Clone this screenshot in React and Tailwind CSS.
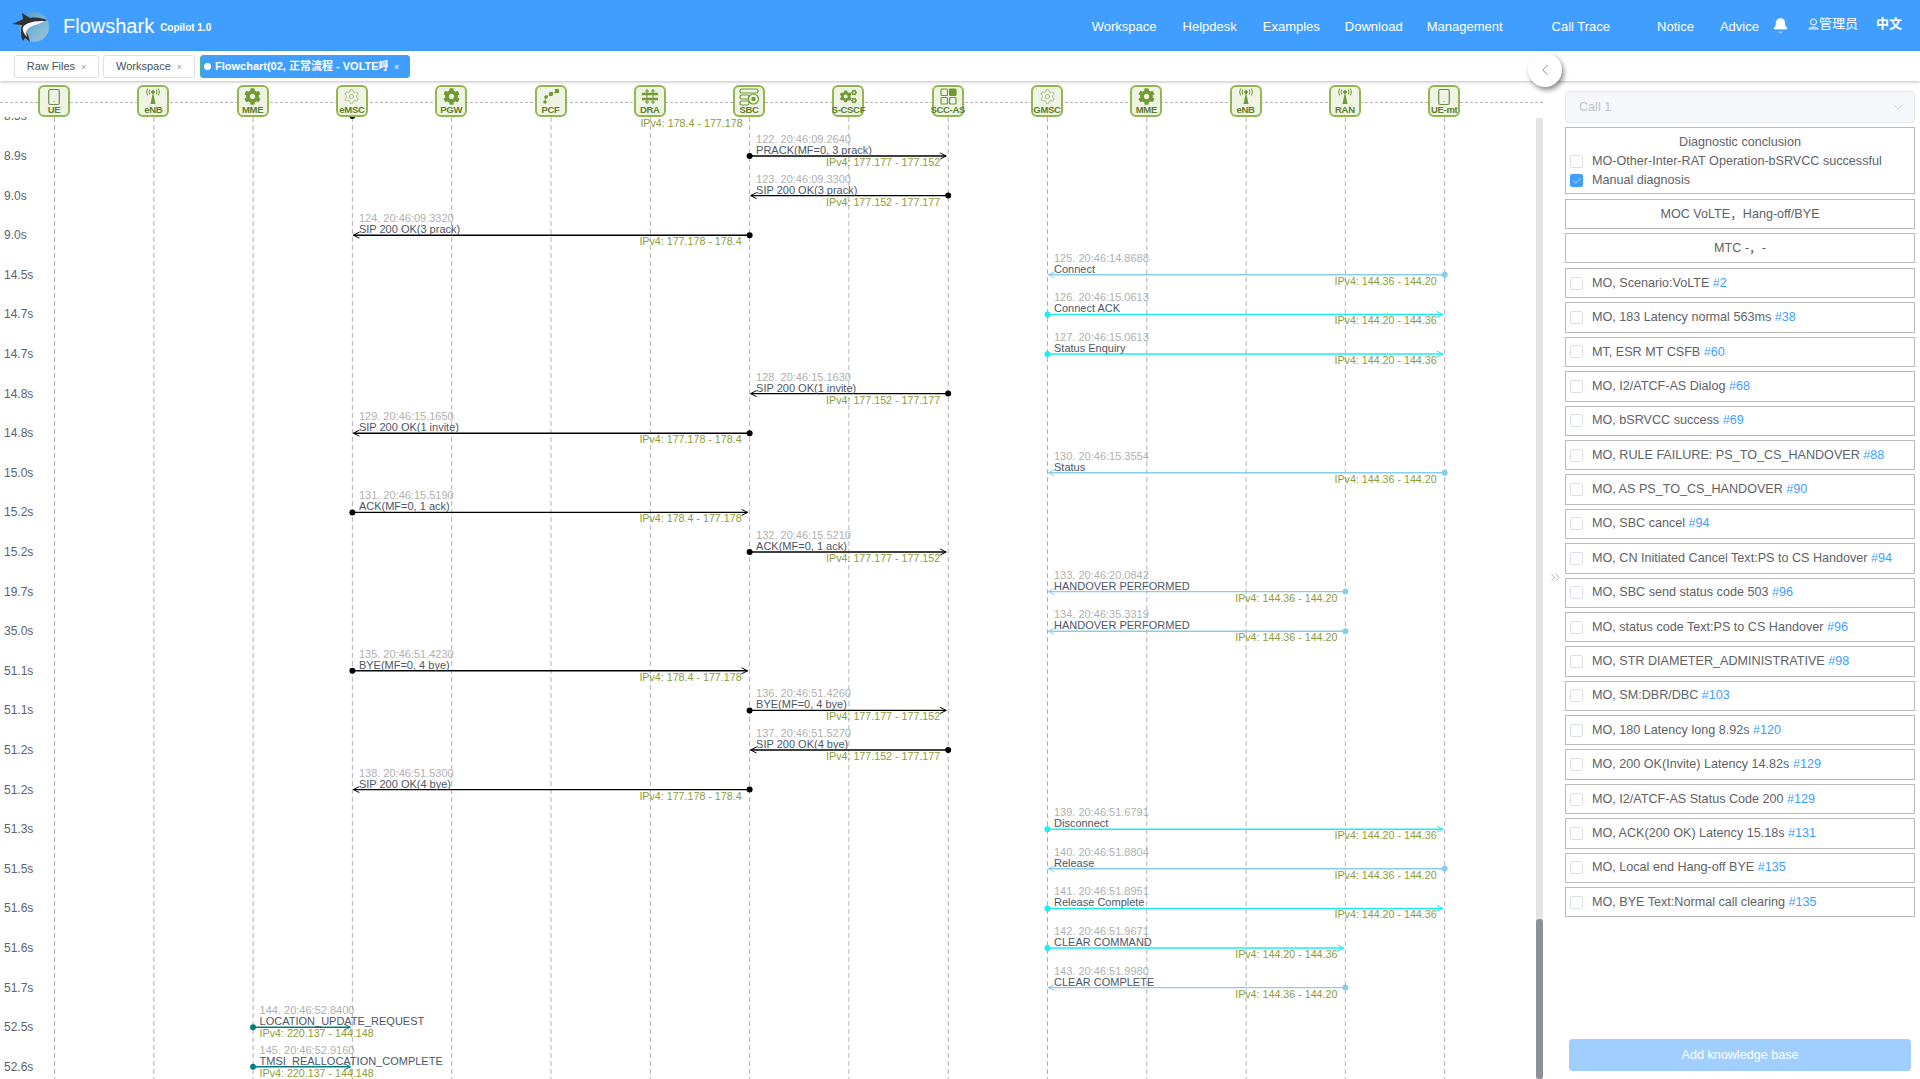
import { FaCog, FaCogs } from "react-icons/fa";
import { Settings, ChevronLeft, ChevronsRight, ChevronDown, Check, Bell, Smartphone } from "lucide-react";

const FONT = "[font-family:'Liberation_Sans','Noto_Sans_CJK_SC',sans-serif]";

const colX = Array.from({ length: 15 }, (_, i) => 54.5 + 99.3 * i);
const MME = 2, EMSC = 3, SBC = 7, SCC = 9, GMSC = 10, RAN = 13, UEMT = 14;

const BLACK = "#000000";
const SKY = "#87ceeb";
const CYAN = "#14f0f5";
const TEAL = "#007d7d";

const rowY = (i) => 156 + 39.6 * i - 117;

const times = ["8.9s", "9.0s", "9.0s", "14.5s", "14.7s", "14.7s", "14.8s", "14.8s", "15.0s", "15.2s", "15.2s", "19.7s", "35.0s", "51.1s", "51.1s", "51.2s", "51.2s", "51.3s", "51.5s", "51.6s", "51.6s", "51.7s", "52.5s", "52.6s"];

const messages = [
  { n: 122, t: "09.2640", name: "PRACK(MF=0, 3 prack)", from: SBC, to: SCC, c: BLACK, ip: "177.177 - 177.152" },
  { n: 123, t: "09.3300", name: "SIP 200 OK(3 prack)", from: SCC, to: SBC, c: BLACK, ip: "177.152 - 177.177" },
  { n: 124, t: "09.3320", name: "SIP 200 OK(3 prack)", from: SBC, to: EMSC, c: BLACK, ip: "177.178 - 178.4" },
  { n: 125, t: "14.8688", name: "Connect", from: UEMT, to: GMSC, c: SKY, ip: "144.36 - 144.20" },
  { n: 126, t: "15.0613", name: "Connect ACK", from: GMSC, to: UEMT, c: CYAN, ip: "144.20 - 144.36" },
  { n: 127, t: "15.0613", name: "Status Enquiry", from: GMSC, to: UEMT, c: CYAN, ip: "144.20 - 144.36" },
  { n: 128, t: "15.1630", name: "SIP 200 OK(1 invite)", from: SCC, to: SBC, c: BLACK, ip: "177.152 - 177.177" },
  { n: 129, t: "15.1650", name: "SIP 200 OK(1 invite)", from: SBC, to: EMSC, c: BLACK, ip: "177.178 - 178.4" },
  { n: 130, t: "15.3554", name: "Status", from: UEMT, to: GMSC, c: SKY, ip: "144.36 - 144.20" },
  { n: 131, t: "15.5190", name: "ACK(MF=0, 1 ack)", from: EMSC, to: SBC, c: BLACK, ip: "178.4 - 177.178" },
  { n: 132, t: "15.5210", name: "ACK(MF=0, 1 ack)", from: SBC, to: SCC, c: BLACK, ip: "177.177 - 177.152" },
  { n: 133, t: "20.0842", name: "HANDOVER PERFORMED", from: RAN, to: GMSC, c: SKY, ip: "144.36 - 144.20" },
  { n: 134, t: "35.3319", name: "HANDOVER PERFORMED", from: RAN, to: GMSC, c: SKY, ip: "144.36 - 144.20" },
  { n: 135, t: "51.4230", name: "BYE(MF=0, 4 bye)", from: EMSC, to: SBC, c: BLACK, ip: "178.4 - 177.178" },
  { n: 136, t: "51.4260", name: "BYE(MF=0, 4 bye)", from: SBC, to: SCC, c: BLACK, ip: "177.177 - 177.152" },
  { n: 137, t: "51.5270", name: "SIP 200 OK(4 bye)", from: SCC, to: SBC, c: BLACK, ip: "177.152 - 177.177" },
  { n: 138, t: "51.5300", name: "SIP 200 OK(4 bye)", from: SBC, to: EMSC, c: BLACK, ip: "177.178 - 178.4" },
  { n: 139, t: "51.6791", name: "Disconnect", from: GMSC, to: UEMT, c: CYAN, ip: "144.20 - 144.36" },
  { n: 140, t: "51.8804", name: "Release", from: UEMT, to: GMSC, c: SKY, ip: "144.36 - 144.20" },
  { n: 141, t: "51.8951", name: "Release Complete", from: GMSC, to: UEMT, c: CYAN, ip: "144.20 - 144.36" },
  { n: 142, t: "51.9671", name: "CLEAR COMMAND", from: GMSC, to: RAN, c: CYAN, ip: "144.20 - 144.36" },
  { n: 143, t: "51.9980", name: "CLEAR COMPLETE", from: RAN, to: GMSC, c: SKY, ip: "144.36 - 144.20" },
  { n: 144, t: "52.8400", name: "LOCATION_UPDATE_REQUEST", from: MME, to: EMSC, c: TEAL, ip: "220.137 - 144.148", ipLeft: true },
  { n: 145, t: "52.9160", name: "TMSI_REALLOCATION_COMPLETE", from: MME, to: EMSC, c: TEAL, ip: "220.137 - 144.148", ipLeft: true },
];

const findings = [
  ["MO, Scenario:VoLTE", "#2"],
  ["MO, 183 Latency normal 563ms", "#38"],
  ["MT, ESR MT CSFB", "#60"],
  ["MO, I2/ATCF-AS Dialog", "#68"],
  ["MO, bSRVCC success", "#69"],
  ["MO, RULE FAILURE: PS_TO_CS_HANDOVER", "#88"],
  ["MO, AS PS_TO_CS_HANDOVER", "#90"],
  ["MO, SBC cancel", "#94"],
  ["MO, CN Initiated Cancel Text:PS to CS Handover", "#94"],
  ["MO, SBC send status code 503", "#96"],
  ["MO, status code Text:PS to CS Handover", "#96"],
  ["MO, STR DIAMETER_ADMINISTRATIVE", "#98"],
  ["MO, SM:DBR/DBC", "#103"],
  ["MO, 180 Latency long 8.92s", "#120"],
  ["MO, 200 OK(Invite) Latency 14.82s", "#129"],
  ["MO, I2/ATCF-AS Status Code 200", "#129"],
  ["MO, ACK(200 OK) Latency 15.18s", "#131"],
  ["MO, Local end Hang-off BYE", "#135"],
  ["MO, BYE Text:Normal call clearing", "#135"],
];

const Tower = () => (
  <svg width="20" height="17" viewBox="0 0 20 17" fill="none" stroke="#6f9a34" strokeWidth="1">
    <circle cx="10" cy="4" r="1.4" fill="#6f9a34" />
    <path d="M10 4 L7.5 16 H12.5 Z" fill="#6f9a34" stroke="none" />
    <path d="M6.8 1.5 Q5.4 4 6.8 6.5 M13.2 1.5 Q14.6 4 13.2 6.5 M4.6 0.5 Q2.6 4 4.6 7.5 M15.4 0.5 Q17.4 4 15.4 7.5" />
  </svg>
);

const Pcf = () => (
  <svg width="20" height="17" viewBox="0 0 20 17" fill="#6f9a34" stroke="#6f9a34" strokeWidth="1">
    <rect x="14" y="1" width="4" height="4" stroke="none" />
    <circle cx="10" cy="6" r="2.2" stroke="none" />
    <circle cx="5" cy="9" r="1.8" stroke="none" />
    <circle cx="4" cy="14" r="1.8" stroke="none" />
    <path d="M15 4 L10 6 L5 9 L4 14" fill="none" strokeDasharray="2 1" />
  </svg>
);

const Dra = () => (
  <svg width="20" height="17" viewBox="0 0 20 17" fill="none" stroke="#6f9a34" strokeWidth="1.4">
    <path d="M2 6 H18 M2 11 H18" strokeWidth="2.4" />
    <path d="M7 1 V16 M13 1 V16 M5 3 H9 M11 3 H15 M5 14 H9 M11 14 H15" strokeWidth="1.1" />
  </svg>
);

const Sbc = () => (
  <svg width="22" height="18" viewBox="0 0 22 18" fill="none" stroke="#6f9a34" strokeWidth="1.2">
    <rect x="2" y="1" width="18" height="4" rx="1.5" />
    <rect x="2" y="7" width="9" height="4" rx="1.5" />
    <rect x="2" y="13" width="9" height="4" rx="1.5" />
    <circle cx="15.5" cy="11" r="5" fill="#eef3e3" />
    <circle cx="15.5" cy="11" r="2.2" fill="#6f9a34" stroke="none" />
  </svg>
);

const Scc = () => (
  <svg width="20" height="17" viewBox="0 0 20 17" fill="none" stroke="#6f9a34" strokeWidth="1.2">
    <rect x="3" y="1" width="6.5" height="6.5" rx="1" />
    <rect x="11.5" y="1" width="6.5" height="6.5" rx="1" fill="#6f9a34" />
    <rect x="3" y="9.5" width="6.5" height="6.5" rx="1" />
    <rect x="11.5" y="9.5" width="6.5" height="6.5" rx="1" />
  </svg>
);

const solidGear = <FaCog size={17} color="#6f9a34" />;
const lineGear = <Settings size={17} color="#87a860" strokeWidth={1} />;
const phone = <Smartphone size={18} color="#6f8a4a" strokeWidth={1.6} />;

const nodes = [
  ["UE", phone], ["eNB", <Tower />], ["MME", solidGear], ["eMSC", lineGear], ["PGW", solidGear],
  ["PCF", <Pcf />], ["DRA", <Dra />], ["SBC", <Sbc />], ["S-CSCF", <FaCogs size={17} color="#6f9a34" />], ["SCC-AS", <Scc />],
  ["GMSC", lineGear], ["MME", solidGear], ["eNB", <Tower />], ["RAN", <Tower />], ["UE-mt", phone],
];

const Logo = () => (
  <svg width="38" height="34" viewBox="0 0 38 34">
    <defs>
      <linearGradient id="ball" x1="0" y1="0" x2="1" y2="1">
        <stop offset="0" stopColor="#4f9ad0" />
        <stop offset="1" stopColor="#9cc8da" />
      </linearGradient>
    </defs>
    <circle cx="22" cy="19" r="15" fill="url(#ball)" />
    <path d="M0 16 C6 14 9 12 11 11 L10 5 L18 10 C24 9 30 10 35 12 C29 15 24 15 20 17 C15 19 13 22 16 27 L18 34 L13 30 L11 33 C8 27 9 20 10 17 Z" fill="#2d3336" />
    <path d="M11 19 C15 14 22 13 33 13 C26 17 20 17 17 20 C14 22 14 26 15 29 C12 26 10 22 11 19 Z" fill="#f4f6f7" />
  </svg>
);

const Tab = ({ label, width }) => (
  <div className={`flex items-center justify-center gap-[6px] h-[23px] ${width} border border-[#dcdfe6] rounded-[3px] bg-white text-[11px] text-[#495060]`}>
    <span>{label}</span>
    <span className="text-[9px] text-[#99a] mt-[2px]">×</span>
  </div>
);

const CheckBox = ({ checked }) =>
  checked ? (
    <span className="flex items-center justify-center w-[13px] h-[13px] rounded-[2px] bg-[#409eff] shrink-0">
      <Check size={10} color="#ffffff" strokeWidth={1.5} />
    </span>
  ) : (
    <span className="w-[13px] h-[13px] border border-[#dcdfe6] rounded-[2px] bg-white shrink-0" />
  );

const Chart = () => (
  <div className="relative flex-1 overflow-hidden">
    <svg className="absolute left-0 top-0" width="1536" height="962">
      {colX.map((x) => (
        <line key={x} x1={x} x2={x} y1="0" y2="962" stroke="#b4b4b4" strokeDasharray="5 3" />
      ))}
      <circle cx={colX[EMSC]} cy="-1" r="3" fill="#000000" />
      {messages.map((m, i) => {
        const y = rowY(i);
        const x1 = colX[m.from];
        const dir = m.to > m.from ? 1 : -1;
        const x2 = colX[m.to] - dir * (dir > 0 ? 2 : 1);
        return (
          <g key={m.n} stroke={m.c} fill="none">
            <line x1={x1} x2={x2} y1={y} y2={y} strokeWidth="1.4" />
            <polyline points={`${x2 - dir * 6},${y - 3} ${x2},${y} ${x2 - dir * 6},${y + 3}`} strokeWidth="1" />
            <circle cx={x1} cy={y} r="3" fill={m.c} stroke="none" />
          </g>
        );
      })}
    </svg>

    <div className="absolute text-right text-[10.7px] leading-[13px] text-[#8c9c3a] whitespace-nowrap" style={{ top: 0, left: colX[SBC] - 207, width: 200 }}>
      IPv4: 178.4 - 177.178
    </div>
    <div className="absolute left-[4px] text-[12px] leading-[14px] text-[#5a6270]" style={{ top: rowY(-1) - 7 }}>
      8.5s
    </div>
    {times.map((t, i) => (
      <div key={i} className="absolute left-[4px] text-[12px] leading-[14px] text-[#5a6270]" style={{ top: rowY(i) - 7 }}>
        {t}
      </div>
    ))}

    {messages.map((m, i) => {
      const y = rowY(i);
      const left = colX[Math.min(m.from, m.to)] + 6.5;
      const right = colX[Math.max(m.from, m.to)] - 8;
      return (
        <div key={m.n}>
          <div className="absolute text-[11px] leading-[13px] text-[#b0b0b0] whitespace-nowrap" style={{ left, top: y - 23 }}>
            {m.n}. 20:46:{m.t}
          </div>
          <div className="absolute text-[11px] leading-[13px] text-[#4d5666] whitespace-nowrap" style={{ left, top: y - 12 }}>
            {m.name}
          </div>
          <div
            className={`absolute text-[10.7px] leading-[13px] text-[#8c9c3a] whitespace-nowrap ${m.ipLeft ? "text-left" : "text-right"}`}
            style={m.ipLeft ? { left, top: y } : { left: right - 200, width: 200, top: y }}
          >
            IPv4: {m.ip}
          </div>
        </div>
      );
    })}

    <div className="absolute left-[1536px] top-[1px] bottom-0 w-[7px] bg-[#e4e4e4]">
      <div className="absolute left-0 right-0 top-[801px] bottom-0 rounded-[3px] bg-[#8c9299]" />
    </div>
  </div>
);

const App = () => {
  return (
    <div className={`relative flex flex-col w-full h-screen overflow-hidden bg-white ${FONT}`}>
      <header className="flex items-center h-[51px] bg-[#409eff] text-white shrink-0">
        <div className="ml-[12px] mt-[-1px]"><Logo /></div>
        <div className="ml-[13px] text-[20px] leading-none">Flowshark</div>
        <div className="ml-[6px] mt-[5px] text-[10px] font-bold leading-none">Copilot 1.0</div>
        <nav className="ml-auto mt-[2px] flex items-center text-[13px] pr-[18px]">
          <span>Workspace</span>
          <span className="ml-[26px]">Helpdesk</span>
          <span className="ml-[26px]">Examples</span>
          <span className="ml-[25px]">Download</span>
          <span className="ml-[24px]">Management</span>
          <span className="ml-[49px]">Call Trace</span>
          <span className="ml-[47px]">Notice</span>
          <span className="ml-[26px]">Advice</span>
          <Bell size={17} className="ml-[13px] mt-[-3px]" fill="#ffffff" strokeWidth={1} />
          <span className="ml-[19px] mt-[-6px] flex items-center text-[13px] font-normal">
            <svg width="11" height="12" viewBox="0 0 11 12" fill="none" stroke="#ffffff">
              <circle cx="5.5" cy="4" r="3" />
              <path d="M0.8 11 C1.5 8.5 9.5 8.5 10.2 11 Z" />
            </svg>
            管理员
          </span>
          <span className="ml-[18px] mt-[-6px] font-bold text-[13px]">中文</span>
        </nav>
      </header>

      <div className="flex items-center gap-[4px] pl-[14px] pt-[1px] h-[30px] shrink-0 shadow-[0_1px_3px_rgba(0,0,0,0.25)] z-10 bg-white">
        <Tab label="Raw Files" width="w-[85px]" />
        <Tab label="Workspace" width="w-[92px]" />
        <div className="flex items-center h-[23px] w-[210px] ml-[1px] bg-[#409eff] border border-[#42b983] rounded-[3px] text-white text-[11px] font-bold">
          <span className="ml-[3px] w-[7px] h-[7px] rounded-full bg-white shrink-0" />
          <span className="ml-[4px] w-[173px] overflow-hidden whitespace-nowrap">Flowchart(02, 正常流程 - VOLTE呼叫</span>
          <span className="ml-[6px] text-[9px] mt-[2px] font-normal">×</span>
        </div>
      </div>

      <main className="flex flex-1 min-h-0">
        <section className="flex flex-col w-[1546px] shrink-0">
          <div className="relative h-[36px] shrink-0">
            <div className="absolute left-0 w-[1543px] top-[21px] border-t border-dashed border-[#b4b4b4]" />
            {nodes.map(([label, icon], i) => (
              <div
                key={i}
                className="absolute top-[4px] flex flex-col items-center w-[32px] h-[32px] pt-[1px] rounded-[6px] border-2 border-[#93b552] bg-[#eef3e3]"
                style={{ left: colX[i] - 16.5 }}
              >
                <div className="flex items-center justify-center h-[17px]">{icon}</div>
                <div className="text-[9.5px] leading-[10px] font-bold text-[#5f7f2d] whitespace-nowrap tracking-[-0.3px]">{label}</div>
              </div>
            ))}
          </div>
          <Chart />
        </section>

        <div className="flex items-center justify-center w-[19px] pb-[6px] shrink-0">
          <ChevronsRight size={15} color="#7d828c" strokeWidth={1} />
        </div>

        <aside className="flex flex-col w-[350px] shrink-0 pt-[10px] pb-[8px] text-[12.6px] text-[#606266]">
          <div className="flex items-center justify-between h-[32px] px-[13px] bg-[#f5f7fa] border border-[#e4e7ed] rounded-[4px] text-[#c0c4cc]">
            <span>Call 1</span>
            <ChevronDown size={16} color="#c0c4cc" strokeWidth={1} className="mr-[-5px]" />
          </div>

          <div className="mt-[4px] h-[67px] border border-[#bbbbbb] px-[4px] pt-[5px] flex flex-col">
            <div className="h-[19px] text-center leading-[18px]">Diagnostic conclusion</div>
            <div className="flex items-center gap-[9px] h-[19px]"><CheckBox /><span>MO-Other-Inter-RAT Operation-bSRVCC successful</span></div>
            <div className="flex items-center gap-[9px] h-[19px]"><CheckBox checked /><span>Manual diagnosis</span></div>
          </div>

          <div className="flex items-center justify-center mt-[5px] h-[30px] border border-[#bbbbbb]">MOC VoLTE，Hang-off/BYE</div>
          <div className="flex items-center justify-center mt-[4px] mb-[5px] h-[30px] border border-[#bbbbbb]">MTC -，-</div>

          {findings.map(([text, link], i) => (
            <div key={i} className="flex items-center gap-[9px] h-[30.4px] mb-[4px] px-[4px] border border-[#bbbbbb] whitespace-nowrap">
              <CheckBox />
              <span>
                {text} <span className="text-[#409eff]">{link}</span>
              </span>
            </div>
          ))}

          <button className="mt-auto mx-[4px] h-[32px] shrink-0 rounded-[4px] bg-[#a0cfff] text-white">Add knowledge base</button>
        </aside>
      </main>

      <div className="absolute left-[1528px] top-[53px] flex items-center justify-center w-[34px] h-[34px] rounded-full bg-white shadow-[2px_3px_5px_rgba(0,0,0,0.45)] z-20">
        <ChevronLeft size={18} color="#606266" strokeWidth={1} />
      </div>
    </div>
  );
};

export default App;
